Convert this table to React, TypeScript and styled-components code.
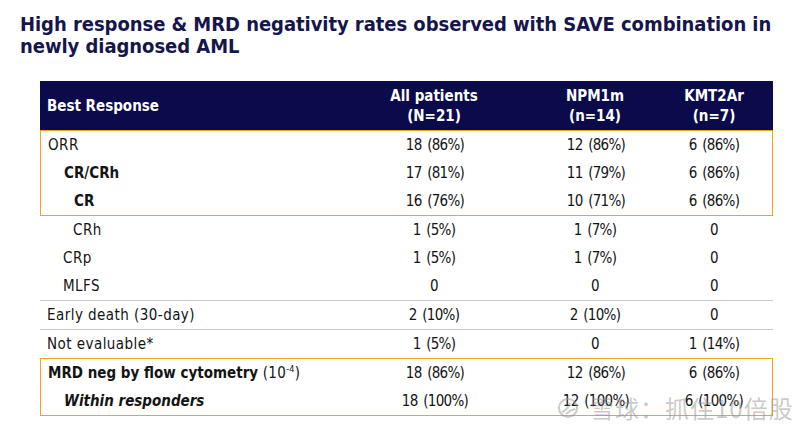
import type { FC, ReactNode } from "react";
import { createGlobalStyle, styled } from "styled-components";

const GlobalStyle = createGlobalStyle`
  html, body {
    margin: 0;
    padding: 0;
    background: #ffffff;
  }
  body {
    font-family: "DejaVu Sans Condensed", "Liberation Sans", sans-serif;
  }
`;

const COLUMNS = "293px 202px 120px 1fr";
const ORANGE = "#f5a31a";

const Page = styled.div`
  position: relative;
  width: 800px;
  height: 432px;
  overflow: hidden;
  background: #ffffff;
`;

const Title = styled.h1`
  margin: 0;
  padding: 13px 20px 0;
  font-size: 20px;
  line-height: 22px;
  font-weight: 700;
  color: #16164a;
  letter-spacing: -0.05px;
`;

const TitleLine = styled.span`
  display: block;
  white-space: nowrap;
`;

const Table = styled.div`
  margin: 24px 0 0 40px;
  width: 733px;
  font-size: 15px;
  color: #141414;
`;

const HeaderRow = styled.div`
  display: grid;
  grid-template-columns: ${COLUMNS};
  height: 49px;
  background: #0b0a4b;
  color: #ffffff;
  font-weight: 700;
  align-items: center;
`;

const HeaderCell = styled.div<{ $left?: boolean }>`
  text-align: ${({ $left }) => ($left ? "left" : "center")};
  padding-left: ${({ $left }) => ($left ? "7px" : "0")};
  line-height: 20px;
`;

const Group = styled.div<{ $boxed?: boolean }>`
  border: ${({ $boxed }) => ($boxed ? `1.5px solid ${ORANGE}` : "0")};
`;

const Row = styled.div<{ $rule?: boolean }>`
  display: grid;
  grid-template-columns: ${COLUMNS};
  height: 28px;
  align-items: center;
  border-bottom: ${({ $rule }) => ($rule ? "1px solid #c8c8c8" : "0")};
`;

const Label = styled.div<{ $indent: number; $bold?: boolean; $italic?: boolean }>`
  padding-left: ${({ $indent }) => 7 + $indent}px;
  font-weight: ${({ $bold }) => ($bold ? 700 : 400)};
  font-style: ${({ $italic }) => ($italic ? "italic" : "normal")};
  letter-spacing: ${({ $bold }) => ($bold ? "0" : "0.45px")};
  white-space: nowrap;
`;

const Value = styled.div`
  text-align: center;
  letter-spacing: -0.7px;
  word-spacing: 2px;
`;

const Light = styled.span`
  font-weight: 400;
  letter-spacing: 0.3px;
`;

const Sup = styled.sup`
  font-size: 9px;
  vertical-align: 6px;
  line-height: 0;
`;

const Watermark = styled.div`
  position: absolute;
  left: 556px;
  top: 390px;
  display: flex;
  align-items: center;
  gap: 10px;
  color: rgba(150, 150, 150, 0.5);
  font-family: "Noto Sans CJK SC", sans-serif;
  font-size: 24px;
  letter-spacing: 1px;
  pointer-events: none;
`;

type RowData = {
  label: ReactNode;
  indent: number;
  bold?: boolean;
  italic?: boolean;
  values: [string, string, string];
};

const orr: RowData[] = [
  { label: "ORR", indent: 0, values: ["18 (86%)", "12 (86%)", "6 (86%)"] },
  { label: "CR/CRh", indent: 16, bold: true, values: ["17 (81%)", "11 (79%)", "6 (86%)"] },
  { label: "CR", indent: 26, bold: true, values: ["16 (76%)", "10 (71%)", "6 (86%)"] },
];

const other: RowData[] = [
  { label: "CRh", indent: 26, values: ["1 (5%)", "1 (7%)", "0"] },
  { label: "CRp", indent: 16, values: ["1 (5%)", "1 (7%)", "0"] },
  { label: "MLFS", indent: 16, values: ["0", "0", "0"] },
];

const mrd: RowData[] = [
  {
    label: (
      <>
        MRD neg by flow cytometry{" "}
        <Light>
          (10<Sup>-4</Sup>)
        </Light>
      </>
    ),
    indent: 0,
    bold: true,
    values: ["18 (86%)", "12 (86%)", "6 (86%)"],
  },
  {
    label: "Within responders",
    indent: 16,
    bold: true,
    italic: true,
    values: ["18 (100%)", "12 (100%)", "6 (100%)"],
  },
];

const DataRow: FC<{ row: RowData; rule?: boolean }> = ({ row, rule }) => (
  <Row $rule={rule}>
    <Label $indent={row.indent} $bold={row.bold} $italic={row.italic}>
      {row.label}
    </Label>
    {row.values.map((v, i) => (
      <Value key={i}>{v}</Value>
    ))}
  </Row>
);

const SnowLogo: FC = () => (
  <svg width="24" height="24" viewBox="0 0 24 24" fill="none" stroke="currentColor" strokeWidth="2">
    <circle cx="12" cy="12" r="9" />
    <path d="M6 16c3-1 6-4 8-9" />
    <path d="M10 18c2-2 5-4 9-5" />
  </svg>
);

const App: FC = () => (
  <Page>
    <GlobalStyle />
    <Title>
      <TitleLine>High response &amp; MRD negativity rates observed with SAVE combination in</TitleLine>
      <TitleLine>newly diagnosed AML</TitleLine>
    </Title>
    <Table>
      <HeaderRow>
        <HeaderCell $left>Best Response</HeaderCell>
        <HeaderCell>
          All patients
          <br />
          (N=21)
        </HeaderCell>
        <HeaderCell>
          NPM1m
          <br />
          (n=14)
        </HeaderCell>
        <HeaderCell>
          KMT2Ar
          <br />
          (n=7)
        </HeaderCell>
      </HeaderRow>
      <Group $boxed>
        {orr.map((r, i) => (
          <DataRow key={i} row={r} />
        ))}
      </Group>
      <Group>
        {other.map((r, i) => (
          <DataRow key={i} row={r} rule={i === other.length - 1} />
        ))}
        <DataRow
          row={{ label: "Early death (30-day)", indent: 0, values: ["2 (10%)", "2 (10%)", "0"] }}
          rule
        />
        <DataRow row={{ label: "Not evaluable*", indent: 0, values: ["1 (5%)", "0", "1 (14%)"] }} />
      </Group>
      <Group $boxed>
        {mrd.map((r, i) => (
          <DataRow key={i} row={r} />
        ))}
      </Group>
    </Table>
    <Watermark>
      <SnowLogo />
      <span>雪球：抓住10倍股</span>
    </Watermark>
  </Page>
);

export default App;
